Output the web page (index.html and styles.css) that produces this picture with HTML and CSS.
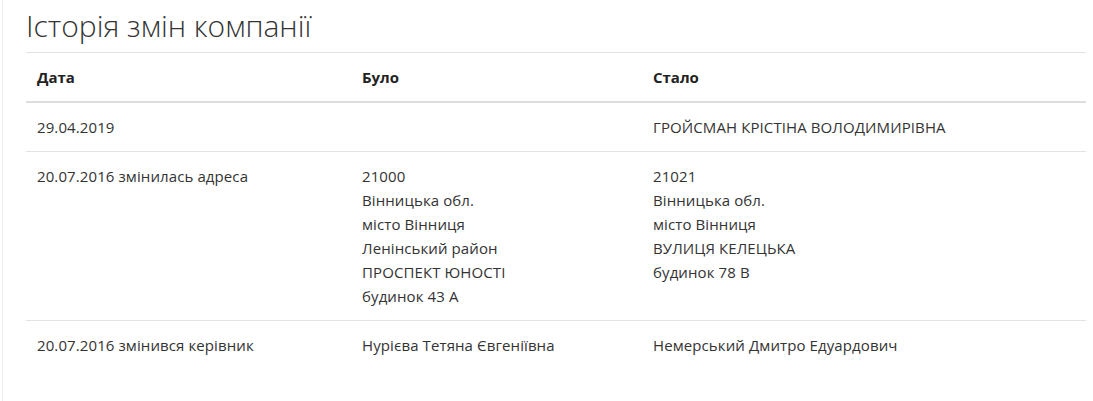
FILE: index.html
```html
<!DOCTYPE html>
<html lang="uk">
<head>
<meta charset="utf-8">
<title>Історія змін компанії</title>
<link rel="stylesheet" href="styles.css">
</head>
<body>
<div class="page">
  <h2 class="title">Історія змін компанії</h2>
  <table class="history">
    <colgroup>
      <col class="col-date">
      <col class="col-was">
      <col class="col-now">
    </colgroup>
    <thead>
      <tr><th>Дата</th><th>Було</th><th>Стало</th></tr>
    </thead>
    <tbody>
      <tr>
        <td>29.04.2019</td>
        <td></td>
        <td>ГРОЙСМАН КРІСТІНА ВОЛОДИМИРІВНА</td>
      </tr>
      <tr>
        <td>20.07.2016 змінилась адреса</td>
        <td>21000<br>Вінницька обл.<br>місто Вінниця<br>Ленінський район<br>ПРОСПЕКТ ЮНОСТІ<br>будинок 43 А</td>
        <td>21021<br>Вінницька обл.<br>місто Вінниця<br>ВУЛИЦЯ КЕЛЕЦЬКА<br>будинок 78 В</td>
      </tr>
      <tr>
        <td>20.07.2016 змінився керівник</td>
        <td>Нурієва Тетяна Євгеніївна</td>
        <td>Немерський Дмитро Едуардович</td>
      </tr>
    </tbody>
  </table>
</div>
</body>
</html>
```

FILE: styles.css
```css
html, body {
  margin: 0;
  padding: 0;
  background: #fff;
}
body {
  font-family: "Open Sans", "Noto Sans", sans-serif;
  font-size: 15px;
  color: #333;
}
.page {
  margin-left: 2px;
  border-left: 1px solid #eee;
  padding: 0 7px 0 23px;
  min-height: 401px;
  box-sizing: border-box;
}
.title {
  margin: 0;
  padding-top: 8px;
  height: 52px;
  box-sizing: border-box;
  font-size: 30px;
  font-weight: 300;
  line-height: 36px;
  color: #333;
}
.history {
  width: 100%;
  border-collapse: collapse;
  border-spacing: 0;
}
.col-date { width: 325px; }
.col-was { width: 291px; }
.history th,
.history td {
  padding: 12px 11px;
  line-height: 24px;
  text-align: left;
  vertical-align: top;
  border-top: 1px solid #e3e3e3;
}
.history th {
  font-weight: 700;
  color: #222;
  border-bottom: 2px solid #ddd;
}
.history td {
  letter-spacing: 0.1px;
}
.history tbody tr:first-child td {
  border-top: 0;
}
```
